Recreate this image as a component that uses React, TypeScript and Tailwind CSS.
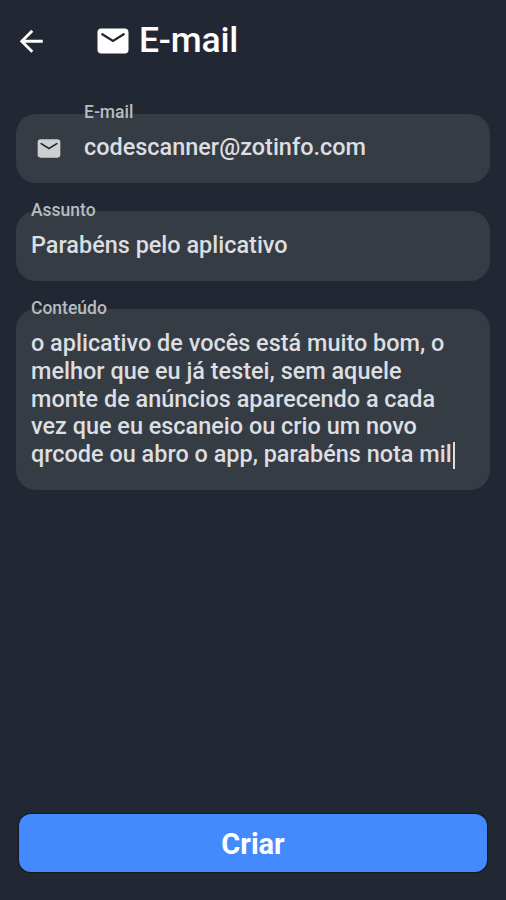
import React, { useState } from 'react';
import { MdArrowBack } from 'react-icons/md';

interface FieldProps {
  label: string;
  icon?: React.ReactNode;
  className?: string;
  bodyClassName?: string;
  children: React.ReactNode;
}

const MailIcon: React.FC<{ className?: string }> = ({ className }) => (
  <svg viewBox="0 0 32 26" className={className} fill="none">
    <rect x="0.5" y="0.5" width="31" height="25" rx="3.8" fill="currentColor" />
    <path d="M5.3 6.3 16 13 26.7 6.3" stroke="#222833" strokeWidth="2.3" strokeLinecap="round" />
  </svg>
);

const Field: React.FC<FieldProps> = ({ label, icon, className = '', bodyClassName = '-mt-[11px]', children }) => (
  <div className={`flex rounded-[20px] bg-[#363c44] pl-[15px] ${className}`}>
    {icon && <div className="w-[53px] shrink-0 pl-[5.5px] pt-[25px] text-[#cdcfd1]">{icon}</div>}
    <div className={`min-w-0 flex-1 ${bodyClassName}`}>
      <div className="mb-[12px] h-[20px] text-[17.5px] font-medium leading-[20px] text-[#b9bbbf]">
        {label}
      </div>
      {children}
    </div>
  </div>
);

export default function App() {
  const [email] = useState('codescanner@zotinfo.com');
  const [subject] = useState('Parabéns pelo aplicativo');
  const [lines] = useState([
    'o aplicativo de vocês está muito bom, o',
    'melhor que eu já testei, sem aquele',
    'monte de anúncios aparecendo a cada',
    'vez que eu escaneio ou crio um novo',
    'qrcode ou abro o app, parabéns nota mil',
  ]);

  return (
    <div className="flex h-[900px] w-[506px] flex-col overflow-hidden bg-[#222833] font-['Roboto',sans-serif] text-white">
      <header className="flex h-[82px] items-center pl-[14px]">
        <button type="button" aria-label="Voltar">
          <MdArrowBack className="size-[34.5px]" />
        </button>
        <MailIcon className="ml-[48px] h-[26px] w-[32px]" />
        <h1 className="ml-[10.5px] text-[35.5px] font-medium leading-none tracking-[-0.2px]">E-mail</h1>
      </header>

      <main className="flex flex-1 flex-col gap-[28px] px-4 pt-[32px] text-[23.45px] font-medium leading-[27.8px] text-[#dcdee1]">
        <Field
          label="E-mail"
          icon={<MailIcon className="h-[19px] w-[24px]" />}
          className="h-[69px]"
          bodyClassName="-mt-[12px]"
        >
          <p className="whitespace-nowrap">{email}</p>
        </Field>
        <Field label="Assunto" className="h-[70px]">
          <p className="whitespace-nowrap">{subject}</p>
        </Field>
        <Field label="Conteúdo" className="h-[181px]">
          {lines.map((line, i) => (
            <p key={line} className="flex items-center whitespace-nowrap">
              {line}
              {i === lines.length - 1 && <span className="ml-px h-[27px] w-[2px] bg-[#dcdee1]" />}
            </p>
          ))}
        </Field>
      </main>

      <footer className="px-[19px] pb-[28px]">
        <button
          type="button"
          className="h-[58px] w-full rounded-[12px] bg-[#448aff] pt-[3px] text-[29px] font-bold leading-none shadow-[0_0_1px_1px_#14171c]"
        >
          Criar
        </button>
      </footer>
    </div>
  );
}
